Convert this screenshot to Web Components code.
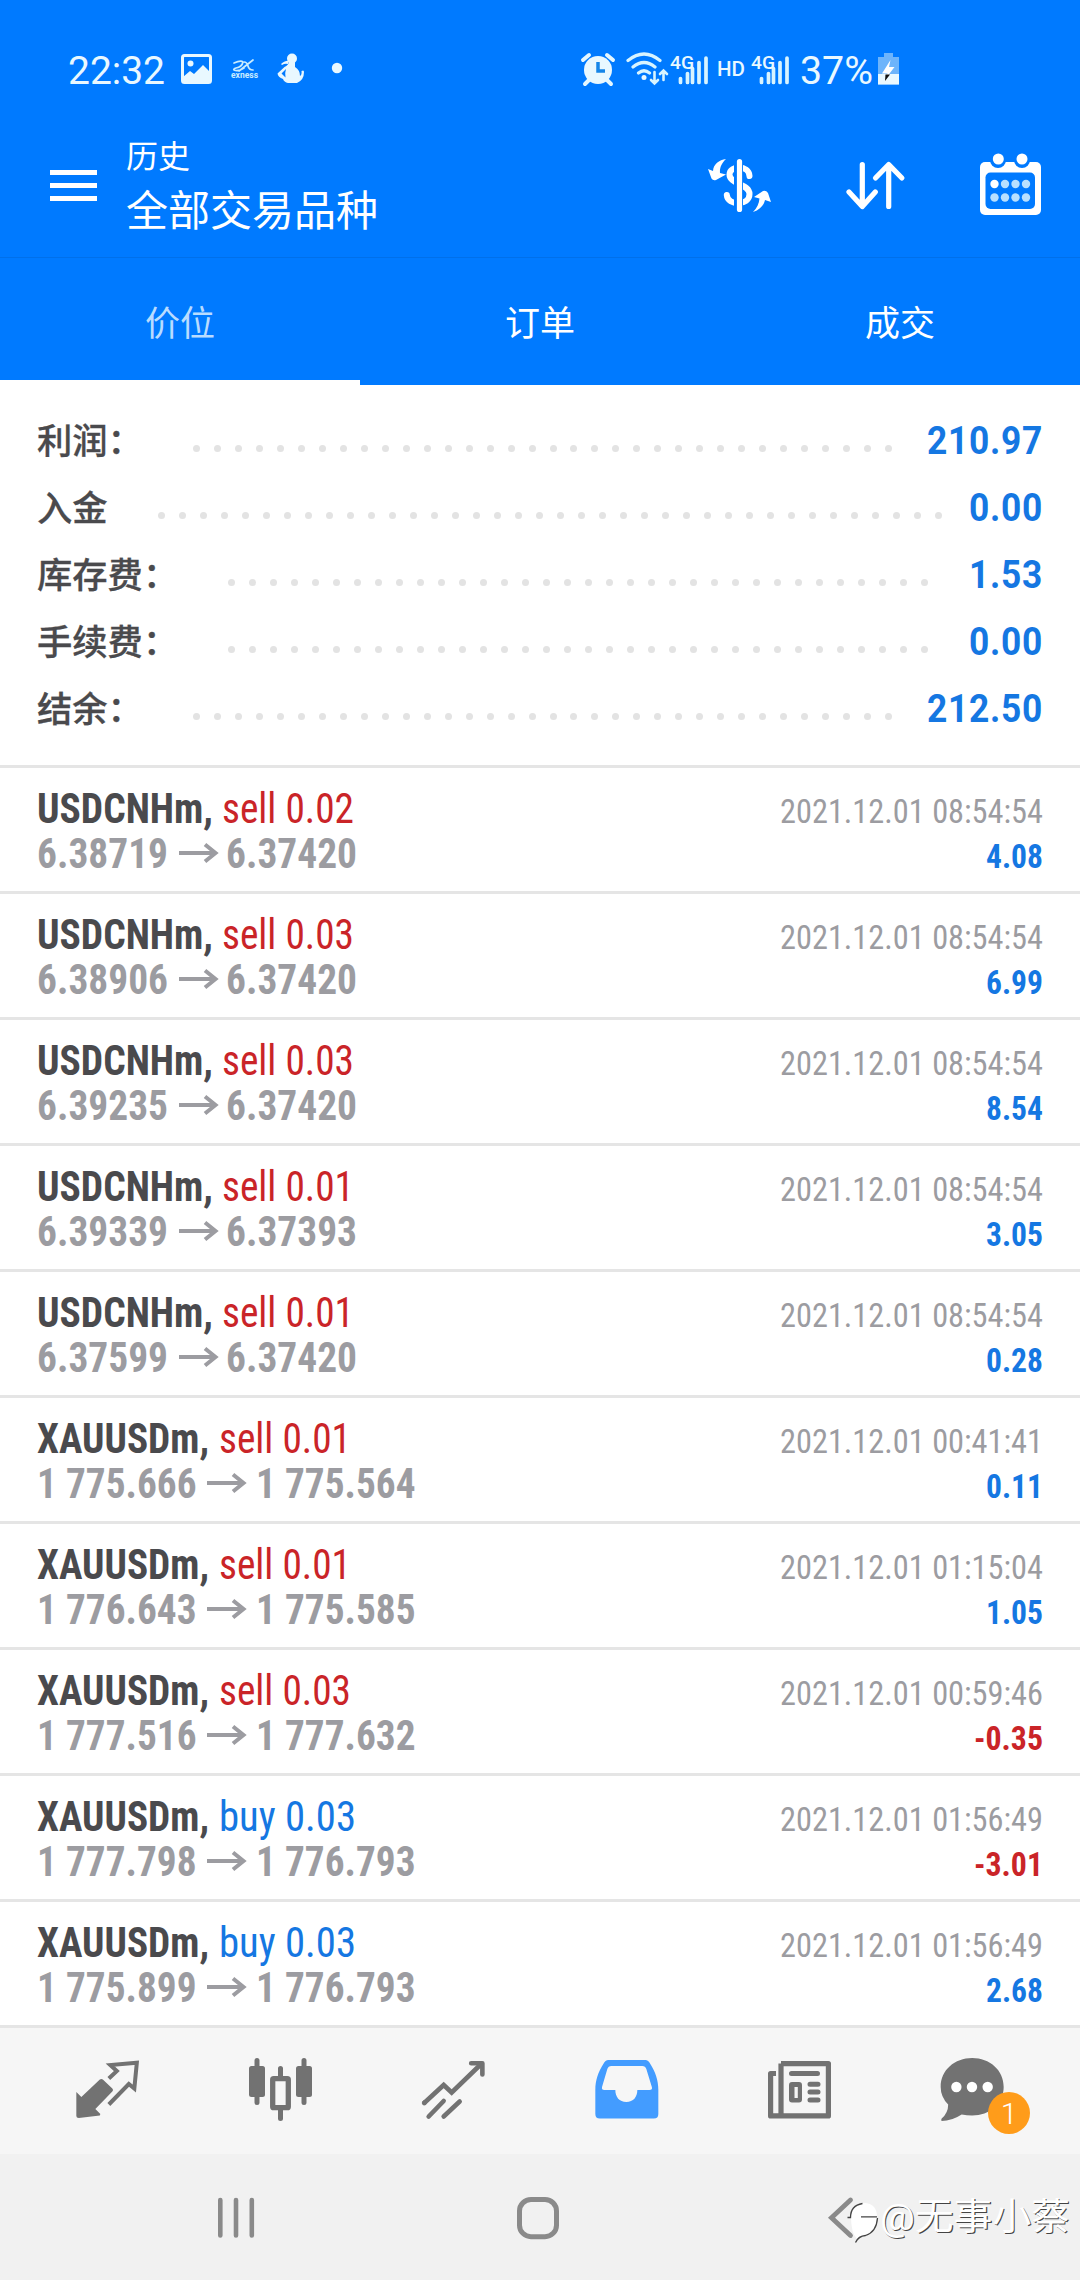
<!DOCTYPE html>
<html lang="zh-CN">
<head>
<meta charset="utf-8">
<title>历史</title>
<style>
html,body{margin:0;padding:0;background:#fff}
body{width:1080px;height:2280px;overflow:hidden;font-family:Roboto,"Noto Sans CJK SC",sans-serif}
</style>
</head>
<body>
<history-app></history-app>
<script>
// Icons: [x, y, width, height, markup] on the shared screen grid
const ICONS = {
  image: [180,48,34,40,`<rect x="182.5" y="55.5" width="28" height="27" rx="2" fill="none" stroke="#e9f8ff" stroke-width="3"/><circle cx="190.5" cy="63.5" r="3"/><path d="M183 77l7-6 4 3 9-9 8 8v10h-28z"/>`],
  exness: [228,48,32,40,`<g fill="none" stroke="#c8ecff" stroke-width="1.7" stroke-linecap="round"><path d="M234 63q7-3 9-1q-1 5-7 6q-3 1-2 2q4 2 10-2M239 71L253 60M244 62q3 0 4 4t5 4"/></g>`],
  person: [275,48,32,40,`<circle cx="292" cy="58.500" r="5"/><path fill-rule="evenodd" d="M289 62h6v5q5 3 5 9 2-1 1.500-5 2.500-1.500 2.500 1 0 8-7 11h-9q-4-1-5-4-5-2-5.500-5.500l7-6.500q4-2 4.500-5zM286 69l-4.500 4.500 4 4q-1-4 .5-8.500zM281 64q5-4 8-3l-1 3q-3-1-6 1z"/>`],
  dot: [330,48,14,40,`<circle cx="337" cy="68" r="5.200"/>`],
  alarm: [580,48,36,40,`<path d="M583 60l6-5M613 60l-6-5M589 80l-4 4M607 80l4 4" stroke="#e4f7ff" stroke-width="4" stroke-linecap="round"/><circle cx="598" cy="70" r="14"/><path d="M598 62v9h7" stroke="#1685e8" stroke-width="3.500" fill="none"/>`],
  wifi: [625,48,44,40,`<g fill="none" stroke="#d8f4ff" stroke-width="3.200" stroke-linecap="round"><path d="M628 60.500q16-13 32 0M633 67q11-9 22 0M638.500 73q5.500-4.500 11 0"/><path d="M654.500 72v11M651 80l3.500 3.500 3.500-3.500M663.500 80v-9M660 74l3.500-3.500 3.500 3.500" stroke-width="2.600"/></g><circle cx="644" cy="77.500" r="2.500"/>`],
  bars: [0,0,30,40,`<path d="M2.500 30.500v4M9.500 25.500v9M14.500 20.500v14M21 14.500v20M28 10v24.500" stroke="#d8f4ff" stroke-width="3.700" stroke-linecap="round"/>`],
  battery: [876,48,26,40,`<path d="M884 53h9v4h6v27.500h-21V57h6z" fill="#6db4fb"/><path d="M878 74h21v10.500h-21z"/><path d="M890.500 60l-8.500 13.500h5.500l-1 4 8-10.500h-5.500z" fill="#fff"/><path d="M885.500 74.500h4.500l-5 6.500z" fill="#111"/>`],
  menu: [48,145,52,80,`<path d="M50 170h47v5H50zM50 183h47v5H50zM50 196h47v5H50z"/>`],
  dollar: [704,145,72,80,`<path d="M749.500 176C749 165 729.500 165 729.500 174.500C729.500 184.500 749.500 183.500 749.500 194C749.500 206 727.500 206 726.800 195" fill="none" stroke="#fff" stroke-width="6" stroke-linecap="round"/><path d="M734 158h9v55h-9z" fill="#007aff"/><path d="M739.500 161.500v48" stroke="#fff" stroke-width="5.200" stroke-linecap="round"/><path d="M726 159C719 160 713.500 164 713 171L708 169L711.500 178.500Q713 181 716 180L726 174.500L720 173C719.500 167 722 163 726 159ZM753 212C760 210 764 205 765 200L771 202L768 193Q766 190 763 191L754 197L759.500 198.500C759 204 757 208 753 212Z"/>`],
  sort: [840,145,72,80,`<path d="M862.300 164.500V206M849 192l13.300 14.500 13-14.500M888.700 206.500V165M875.500 178l13.200-13.500 13.200 13.500" fill="none" stroke="#fff" stroke-width="5.200" stroke-linecap="round" stroke-linejoin="round"/>`],
  calendar: [974,145,72,80,`<rect x="980" y="162" width="61" height="53" rx="5"/><rect x="985.500" y="172.500" width="49.500" height="36.500" rx="5" fill="#007aff"/><g fill="#007aff"><circle cx="998" cy="160" r="8"/><circle cx="1022" cy="160" r="8"/></g><circle cx="998.300" cy="159" r="5.500"/><circle cx="1022" cy="159" r="5.500"/><circle cx="994.500" cy="184" r="4.200"/><g fill="#b8e0ff"><circle cx="1005" cy="184" r="4.200"/><circle cx="1015.500" cy="184" r="4.200"/><circle cx="1026" cy="184" r="4.200"/><circle cx="994.500" cy="197.500" r="4.200"/><circle cx="1005" cy="197.500" r="4.200"/><circle cx="1015.500" cy="197.500" r="4.200"/><circle cx="1026" cy="197.500" r="4.200"/></g>`],
  quotes: [66.67,2027,80,126,`<path d="M76 2092l5 5 18.500-17.500q1.500-1 3 0l9.500 9q1.500 1.500 0 3L95 2109l5 5-.5 1.500-21 2.500q-2.500 0-2.500-2z"/><path d="M108.500 2078.500L116.500 2071L110 2065L136.500 2062.800L134 2088.500L128.500 2084L108.500 2104.500" fill="none" stroke="#727272" stroke-width="4"/>`],
  chart: [240,2027,80,126,`<rect x="249" y="2066" width="16" height="31" rx="2.500"/><rect x="296" y="2066" width="16" height="31" rx="2.500"/><path d="M257 2060.500v42M304 2060.500v42M280.500 2068.500v8M280.500 2110v8.500" stroke="#727272" stroke-width="5" stroke-linecap="round"/><rect x="272.700" y="2078.700" width="15.600" height="29" rx="1" fill="none" stroke="#727272" stroke-width="5.300"/>`],
  trade: [413.33,2027,80,126,`<g fill="none" stroke="#727272" stroke-width="4.600" stroke-linecap="round"><path d="M424 2103.500L444 2085L452 2092.500L482 2063.500" stroke-linecap="butt"/><path d="M424.500 2103L425 2102.500M429 2116.500L444 2101M444 2116.500L460 2101.500"/><path d="M471.500 2063.300H482.700V2074.500" stroke-linejoin="round"/></g>`],
  inbox: [586.67,2027,80,126,`<path fill-rule="evenodd" d="M608 2060H645Q648 2060 650 2064C655 2072 658 2080 658 2090V2114q0 4.500-4.500 4.500H599.500q-4.500 0-4.500-4.500V2090C595 2080 598 2072 603 2064Q605 2060 608 2060ZM611 2066Q608 2066 607 2069L601.700 2087Q601 2090 604 2090H615C615 2097 619 2102 626 2102C633 2102 637 2097 637 2090H649Q652.500 2090 651.500 2087L646 2069Q645 2066 642 2066Z"/>`],
  news: [760,2027,80,126,`<path fill="none" stroke="#727272" stroke-width="5.200" stroke-linejoin="round" d="M781 2063.600H828.400V2115.900H770.600V2073.500H776M781 2063.600V2115.900"/><path d="M791.500 2073.500h26M810 2084.300h8M810 2092h8M810 2100h8" stroke="#727272" stroke-width="5" stroke-linecap="round"/><path fill-rule="evenodd" d="M792 2082h7q3 0 3 3v14.500q0 3-3 3h-7q-3 0-3-3V2085q0-3 3-3zM794.500 2087v11h3.300v-11z"/>`],
  chat: [933.33,2027,80,126,`<path d="M972.500 2058C990 2058 1004 2070 1004 2087S990 2115.500 972.500 2115.500Q967 2115.500 962 2114.500Q952 2121 942 2121Q941 2120 942 2118.500Q948.500 2113 948.500 2104.500Q941 2097 941 2087C941 2070 955 2058 972.500 2058Z"/><g fill="#fff"><circle cx="956.700" cy="2087" r="5.200"/><circle cx="972.300" cy="2087" r="5.200"/><circle cx="988" cy="2087" r="5.200"/></g>`],
  recents: [206,2188,60,60,`<path d="M220.300 2200v35.500M236 2200v35.500M251.800 2200v35.500" stroke="#8a8a8a" stroke-width="4.600" stroke-linecap="round"/>`],
  home: [508,2188,60,60,`<rect x="519.500" y="2199.500" width="37" height="37.200" rx="11.500" fill="none" stroke="#8a8a8a" stroke-width="5"/>`],
  back: [811,2188,60,60,`<path d="M850.500 2200L831.500 2217.700L850.500 2235.500" fill="none" stroke="#8a8a8a" stroke-width="4.800" stroke-linecap="round"/>`],
  arrow: [0,0,40,22,`<path d="M0 11h36" stroke="#9c9ca1" stroke-width="4"/><path d="M26 2.500l10.500 8.500L26 19.500" fill="none" stroke="#9c9ca1" stroke-width="4"/>`],
  sina: [845,2190,40,56,`<path d="M851 2217q1-13 14-14 12 1 12 14 0 12-12 19l-8 3q-6-6-6-22z" fill="#fff"/><path d="M847.500 2217.500h3q0-12 12-14M861 2216.800h16M877.500 2218q-1 14-12 17.500-7 .5-10 7" fill="none" stroke="#444" stroke-width="1.300"/>`],
};
const define = (name, html, init) => customElements.define(name, class extends HTMLElement {
  constructor(){ super(); this.attachShadow({mode:'open'}); }
  connectedCallback(){
    this.shadowRoot.innerHTML = typeof html === 'function' ? html(this) : html;
    if (init) init(this);
  }
});

define('app-icon', el => {
  const [x,y,w,h,body] = ICONS[el.getAttribute('name')];
  return `<style>:host{display:block;flex:none}svg{display:block;fill:currentColor}</style>
  <svg width="${w}" height="${h}" viewBox="${x} ${y} ${w} ${h}">${body}</svg>`;
});

// Condenses (or widens) a single line of text to the width given in "w".
define('fit-text', el => `<style>:host{display:inline-block;flex:none;white-space:nowrap;width:${el.getAttribute('w')}px}
  span{display:inline-block;transform-origin:0 50%}</style><span><slot></slot></span>`,
  el => {
    const s = el.shadowRoot.querySelector('span');
    const w = s.getBoundingClientRect().width;
    if (w) s.style.transform = `scaleX(${(+el.getAttribute('w')/w).toFixed(4)})`;
  });

define('status-bar', `<style>
  :host{display:flex;align-items:center;height:136px;color:#e9f8ff}
  .t{font-size:39px;line-height:46px;margin-top:5px}
  .g{font-size:19px;line-height:24px;font-weight:500;margin-bottom:11px}
  .sig{display:grid;align-items:center}
  .sig>*{grid-area:1/1}
  .sig .b{margin-left:8px}
  .ex{display:grid;grid-template-columns:32px;justify-items:center;align-items:center}
  .ex>*{grid-area:1/1}
  .ex fit-text{font-size:9px;line-height:10px;font-weight:700;margin-top:14px;color:#c8ecff}
</style>
<fit-text w="97" class="t" style="margin-left:68px">22:32</fit-text>
<app-icon name="image" style="margin-left:15px"></app-icon>
<div class="ex" style="margin-left:14px"><app-icon name="exness"></app-icon><fit-text w="27">exness</fit-text></div>
<app-icon name="person" style="margin-left:15px"></app-icon>
<app-icon name="dot" style="margin-left:23px"></app-icon>
<app-icon name="alarm" style="margin-left:236px"></app-icon>
<app-icon name="wifi" style="margin-left:9px"></app-icon>
<div class="sig" style="margin-left:1px"><fit-text w="24" class="g">4G</fit-text><app-icon name="bars" class="b"></app-icon></div>
<fit-text w="28" style="margin-left:9px;font-size:20px;font-weight:500;line-height:24px;margin-top:2px">HD</fit-text>
<div class="sig" style="margin-left:6px"><fit-text w="24" class="g">4G</fit-text><app-icon name="bars" class="b"></app-icon></div>
<fit-text w="73" class="t" style="margin-left:11px">37%</fit-text>
<app-icon name="battery" style="margin-left:3px"></app-icon>`);

define('title-bar', `<style>
  :host{display:flex;align-items:flex-start;height:121px;color:#fff;font-family:"Noto Sans CJK SC",sans-serif}
  app-icon{margin-top:9px}
  .txt{display:flex;flex-direction:column;flex:1;margin-left:26px}
  .a{font-size:32px;line-height:36px}
  .b{font-size:42px;line-height:56px;margin-top:8px}
  .acts{display:flex;padding-right:34px}
  .acts app-icon:nth-child(2){margin-left:64px}
  .acts app-icon:nth-child(3){margin-left:62px}
</style>
<app-icon name="menu" style="margin-left:48px"></app-icon>
<div class="txt"><span class="a">历史</span><span class="b">全部交易品种</span></div>
<div class="acts"><app-icon name="dollar"></app-icon><app-icon name="sort"></app-icon><app-icon name="calendar"></app-icon></div>`);

define('history-tab', `<style>
  :host{display:flex;flex:1;justify-content:center;align-items:center;box-sizing:border-box;height:127px;border-bottom:5px solid #007aff;color:#fff;
    font:400 35px/50px "Noto Sans CJK SC",sans-serif;padding-top:3px}
  :host([active]){color:#b9dcff;border-bottom-color:#fff}
</style><slot></slot>`);

define('tab-strip', `<style>:host{display:flex;height:127px;border-top:1px solid #0070ea}</style><slot></slot>`);

define('summary-row', el => `<style>
  :host{display:flex;height:67px;align-items:flex-start;padding:0 37px}
  .l{font:500 35.300px/67px "Noto Sans CJK SC",sans-serif;color:#4a4a4d;margin-top:-2px;-webkit-text-stroke:.3px #4a4a4d}
  .d{flex:1;display:flex;justify-content:space-between;margin-top:38px}
  i{width:7px;height:7px;border-radius:50%;background:#e3e3e3}
  fit-text{font-size:38px;line-height:67px;font-weight:700;color:#1577e2;margin-top:1px;letter-spacing:.8px}
</style>
<span class="l">${el.getAttribute('label')}</span>
<span class="d" style="margin-left:${el.getAttribute('ml')}px;margin-right:${el.getAttribute('mr')}px">${'<i></i>'.repeat(+el.getAttribute('n'))}</span>
<fit-text w="${el.getAttribute('w')}">${el.getAttribute('value')}</fit-text>`);

define('deal-row', el => {
  const g = k => el.getAttribute(k);
  const usd = g('symbol') === 'USDCNHm';
  const buy = g('side') === 'buy', neg = g('profit')[0] === '-';
  const pw = usd ? 131 : 159.5;
  return `<style>
  :host{display:flex;justify-content:space-between;box-sizing:border-box;height:126px;border-top:3px solid #e5e5e5;padding:0 37px;
    font-family:"Roboto Condensed",Roboto,sans-serif;font-stretch:75%}
  .left{padding-top:18px;font-size:42px;line-height:45px}
  .right{padding-top:20.500px;font-size:34px;line-height:45px;display:flex;flex-direction:column;align-items:flex-end}
  .row{display:flex;align-items:center;height:45px}
  .s{font-weight:700;color:#4a4a4d}
  .k{color:${buy ? '#1577e2' : '#ca2428'};margin-left:${usd ? 9 : 10}px}
  .p{font-weight:700;color:#9c9ca1}
  app-icon{margin:-1px ${usd ? 7 : 9}px 0 ${usd ? 11 : 10}px}
  .d{color:#9c9ca1}
  .v{font-weight:700;color:${neg ? '#ca2428' : '#1577e2'}}
</style>
<div class="left">
 <div class="row"><fit-text class="s" w="${usd ? 176 : 172}">${g('symbol')},</fit-text><fit-text class="k" w="${buy ? 137 : 132}">${g('side')} ${g('volume')}</fit-text></div>
 <div class="row"><fit-text class="p" w="${pw}">${g('open')}</fit-text><app-icon name="arrow"></app-icon><fit-text class="p" w="${pw}">${g('close')}</fit-text></div>
</div>
<div class="right"><fit-text class="d" w="263">${g('time')}</fit-text><fit-text class="v" w="${neg ? 69 : 57}">${g('profit')}</fit-text></div>`;
});

define('bottom-tabs', `<style>
  :host{display:flex;box-sizing:border-box;height:129px;border-top:3px solid #e5e5e5;background:#f6f6f6;padding:0 20px;color:#727272}
  div{flex:1;display:flex;justify-content:center;position:relative}
  app-icon{margin-top:-1px}
  .on{color:#439cff}
  b{position:absolute;left:101.500px;top:63.500px;width:42px;height:42px;border-radius:50%;background:#ff9c1a;color:#fff;font:300 30px/43px Roboto,sans-serif;text-align:center}
</style>
<div><app-icon name="quotes"></app-icon></div><div><app-icon name="chart"></app-icon></div><div><app-icon name="trade"></app-icon></div>
<div class="on"><app-icon name="inbox"></app-icon></div><div><app-icon name="news"></app-icon></div><div><app-icon name="chat"></app-icon><b>1</b></div>`);

define('system-nav', `<style>
  :host{display:flex;box-sizing:border-box;height:126px;background:#f1f1f1;padding:34px 88px 0 85px;position:relative}
  div{flex:1;display:flex;justify-content:center}
  .wm{position:absolute;left:845px;top:36px;display:flex;justify-content:flex-start;color:#fff;font:400 37px/56px Roboto,"Noto Sans CJK SC",sans-serif}
  .wm fit-text{margin-left:-5px;text-shadow:1px 1px .6px #444}
</style>
<div><app-icon name="recents"></app-icon></div><div><app-icon name="home"></app-icon></div><div><app-icon name="back"></app-icon></div>
<span class="wm"><app-icon name="sina"></app-icon><fit-text w="190">@无事小蔡</fit-text></span>`);

const DEALS = [
 ['USDCNHm','sell','0.02','6.38719','6.37420','2021.12.01 08:54:54','4.08'],
 ['USDCNHm','sell','0.03','6.38906','6.37420','2021.12.01 08:54:54','6.99'],
 ['USDCNHm','sell','0.03','6.39235','6.37420','2021.12.01 08:54:54','8.54'],
 ['USDCNHm','sell','0.01','6.39339','6.37393','2021.12.01 08:54:54','3.05'],
 ['USDCNHm','sell','0.01','6.37599','6.37420','2021.12.01 08:54:54','0.28'],
 ['XAUUSDm','sell','0.01','1 775.666','1 775.564','2021.12.01 00:41:41','0.11'],
 ['XAUUSDm','sell','0.01','1 776.643','1 775.585','2021.12.01 01:15:04','1.05'],
 ['XAUUSDm','sell','0.03','1 777.516','1 777.632','2021.12.01 00:59:46','-0.35'],
 ['XAUUSDm','buy','0.03','1 777.798','1 776.793','2021.12.01 01:56:49','-3.01'],
 ['XAUUSDm','buy','0.03','1 775.899','1 776.793','2021.12.01 01:56:49','2.68'],
];
define('history-app', `<style>
  :host{display:flex;flex-direction:column;width:1080px;height:2280px;background:#fff}
  header{background:#007aff}
  .sum{height:380px;box-sizing:border-box;padding-top:22px}
</style>
<header><status-bar></status-bar><title-bar></title-bar>
<tab-strip><history-tab active>价位</history-tab><history-tab>订单</history-tab><history-tab>成交</history-tab></tab-strip></header>
<section class="sum">
<summary-row label="利润：" value="210.97" n="34" ml="50.4" mr="35" w="116"></summary-row>
<summary-row label="入金" value="0.00" n="38" ml="50.4" mr="26.6" w="74"></summary-row>
<summary-row label="库存费：" value="1.53" n="34" ml="50" mr="40.4" w="74"></summary-row>
<summary-row label="手续费：" value="0.00" n="34" ml="50" mr="40.4" w="74"></summary-row>
<summary-row label="结余：" value="212.50" n="34" ml="50.4" mr="35" w="116"></summary-row>
</section>
<section>${DEALS.map(d => `<deal-row symbol="${d[0]}" side="${d[1]}" volume="${d[2]}" open="${d[3]}" close="${d[4]}" time="${d[5]}" profit="${d[6]}"></deal-row>`).join('')}</section>
<bottom-tabs></bottom-tabs><system-nav></system-nav>`);
</script>
</body>
</html>
